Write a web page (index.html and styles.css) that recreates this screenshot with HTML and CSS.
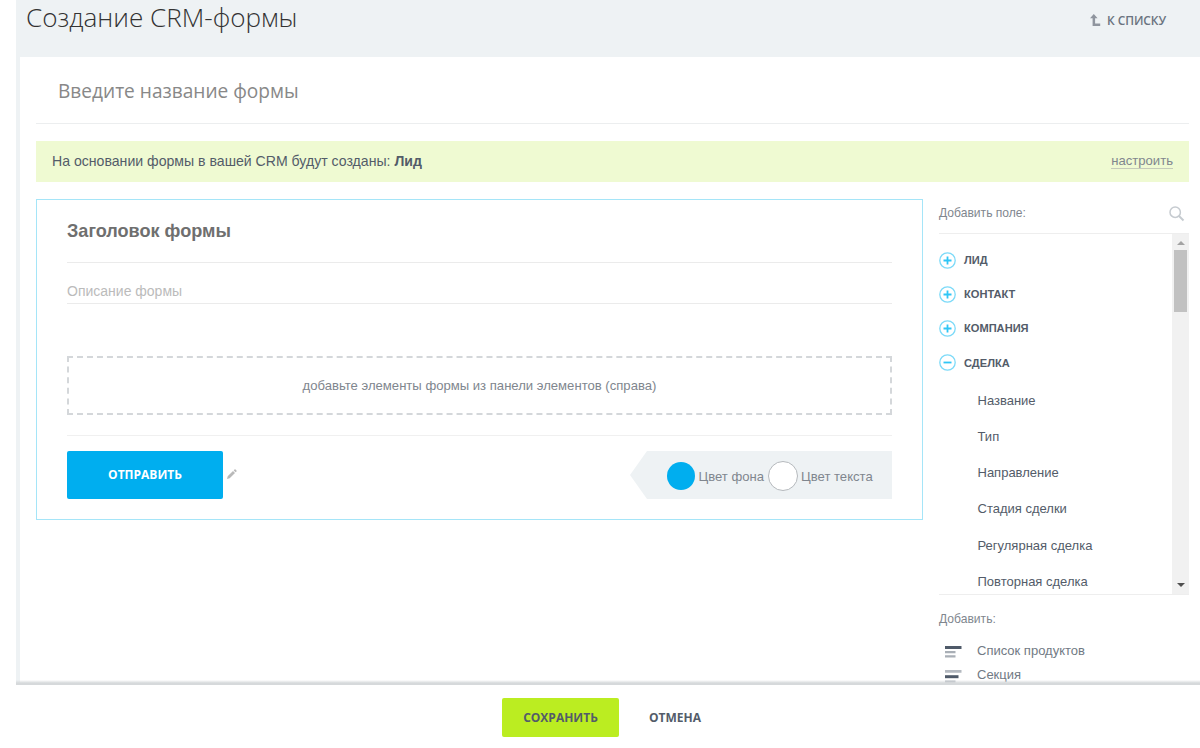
FILE: index.html
```html
<!DOCTYPE html>
<html lang="ru">

<head>
  <meta charset="UTF-8" />
  <meta name="viewport" content="width=device-width, initial-scale=1.0" />
  <title>Создание CRM-формы</title>
  <link rel="stylesheet" href="styles.css">
</head>

<body>
  <div class="page">
    <div class="workarea">
      <div class="header">
        <h1>Создание CRM-формы</h1>
        <a href="#" class="back">
          <svg width="11" height="13" viewBox="0 0 11 13">
            <path d="M0 4.200L3.800 0l3.800 4.200H5.100V9.600H10.200V12H2.600V4.200z" fill="#8f959e" />
          </svg>
          <span>К списку</span>
        </a>
      </div>

      <div class="panel">
        <div class="name">Введите название формы</div>

        <div class="notice">
          <p>На основании формы в вашей CRM будут созданы: <b>Лид</b></p>
          <a href="#">настроить</a>
        </div>

        <div class="columns">
          <div class="form-card">
            <h2>Заголовок формы</h2>
            <div class="desc">Описание формы</div>
            <div class="drop">добавьте элементы формы из панели элементов (справа)</div>
            <div class="form-footer">
              <button type="button" class="send">Отправить</button>
              <svg class="pencil" width="10" height="10" viewBox="0 0 10 10" fill="#b9b9b9">
                <path d="M0 10l.7-2.700L6 2l2 2L2.700 9.300zM6.700 1.400L8 .1 9.900 2 8.600 3.300z" />
              </svg>
              <div class="colors">
                <span class="circle blue"></span>
                <span class="color-name">Цвет фона</span>
                <span class="circle white"></span>
                <span class="color-name">Цвет текста</span>
              </div>
            </div>
          </div>

          <div class="sidebar">
            <div class="search">
              <span>Добавить поле:</span>
              <svg width="16" height="16" viewBox="0 0 16 16" fill="none" stroke="#c6cbd0">
                <circle cx="6.200" cy="6.200" r="5.200" stroke-width="1.500" />
                <path d="M10 10l4.500 4.500" stroke-width="2" />
              </svg>
            </div>

            <div class="tree">
              <div class="tree-list">
                <ul class="groups">
                  <li>
                    <svg width="17" height="17" viewBox="0 0 17 17" class="toggle"><circle cx="8.500" cy="8.500" r="7.700" /><path d="M4.500 8.500h8M8.500 4.500v8" /></svg>
                    <span>Лид</span>
                  </li>
                  <li>
                    <svg width="17" height="17" viewBox="0 0 17 17" class="toggle"><circle cx="8.500" cy="8.500" r="7.700" /><path d="M4.500 8.500h8M8.500 4.500v8" /></svg>
                    <span>Контакт</span>
                  </li>
                  <li>
                    <svg width="17" height="17" viewBox="0 0 17 17" class="toggle"><circle cx="8.500" cy="8.500" r="7.700" /><path d="M4.500 8.500h8M8.500 4.500v8" /></svg>
                    <span>Компания</span>
                  </li>
                  <li>
                    <svg width="17" height="17" viewBox="0 0 17 17" class="toggle"><circle cx="8.500" cy="8.500" r="7.700" /><path d="M4.500 8.500h8" /></svg>
                    <span>Сделка</span>
                  </li>
                </ul>
                <ul class="fields">
                  <li>Название</li>
                  <li>Тип</li>
                  <li>Направление</li>
                  <li>Стадия сделки</li>
                  <li>Регулярная сделка</li>
                  <li>Повторная сделка</li>
                </ul>
              </div>
              <div class="scrollbar">
                <span class="arrow up"></span>
                <span class="thumb"></span>
                <span class="arrow down"></span>
              </div>
            </div>

            <div class="add-title">Добавить:</div>
            <ul class="add">
              <li>
                <svg width="17" height="12" viewBox="0 0 17 12">
                  <path d="M0 0h16.500v3H0z" fill="#4f5a69" />
                  <path d="M0 5h10.500v2.200H0zM0 9.200h10.500v2.200H0z" fill="#a9afb6" />
                </svg>
                <span>Список продуктов</span>
              </li>
              <li>
                <svg width="17" height="13" viewBox="0 0 17 13">
                  <path d="M0 0h16.500v2.800H0zM0 10.500h10.500v2.200H0z" fill="#b4b9c0" />
                  <path d="M0 5.200h13.500v3H0z" fill="#4f5a69" />
                </svg>
                <span>Секция</span>
              </li>
            </ul>
          </div>
        </div>
      </div>
    </div>

    <div class="actions">
      <button type="button" class="save">Сохранить</button>
      <button type="button" class="cancel">Отмена</button>
    </div>
  </div>
</body>

</html>
```
FILE: styles.css
```css
* {
  margin: 0;
  padding: 0;
  box-sizing: border-box;
}

body {
  height: 100vh;
  overflow: hidden;
  background: #fff;
  font-family: 'Liberation Sans', Arial, sans-serif;
  color: #535c69;
  white-space: nowrap;
}

ul {
  list-style: none;
}

a {
  text-decoration: none;
}

button {
  border: none;
  cursor: pointer;
}

svg {
  flex-shrink: 0;
}

.page {
  height: 100%;
  padding-left: 16px;
}

.workarea {
  position: relative;
  height: 685px;
  overflow: hidden;
  background: #eef2f4;
}

/* shadow of the bottom bar */
.workarea::after {
  content: "";
  position: absolute;
  left: 0;
  right: 0;
  bottom: 0;
  height: 5px;
  background: linear-gradient(rgba(200, 203, 206, 0), #d6d9db 60%, #d6d9db);
}

.header {
  height: 57px;
  padding: 0 34px 0 10px;
  display: flex;
  justify-content: space-between;
}

.header h1 {
  font: 300 26.1px/35px 'Open Sans', sans-serif;
  color: #333;
}

.back {
  display: flex;
  gap: 6px;
  height: 40px;
  align-items: center;
  font: 600 12px 'Open Sans', sans-serif;
  letter-spacing: -0.1px;
  text-transform: uppercase;
  color: #6b7480;
}

.panel {
  height: 640px;
  margin-left: 4px;
  padding: 0 11px 0 16px;
  background: #fff;
}

.name {
  height: 67px;
  padding-left: 22px;
  border-bottom: 1px solid #eceeef;
  font: 19.1px/68px 'Open Sans', sans-serif;
  color: #888;
}

.notice {
  display: flex;
  justify-content: space-between;
  align-items: center;
  height: 41px;
  margin: 17px 0;
  padding: 0 16px;
  background: #effad2;
  font-size: 14.1px;
}

.notice p {
  padding-bottom: 1px;
}

.notice a {
  margin-top: -1px;
  font-size: 13.1px;
  color: #80868e;
  border-bottom: 1px solid #c5cbb9;
}

.columns {
  display: flex;
  justify-content: space-between;
  align-items: flex-start;
}

.form-card {
  width: 887px;
  height: 321px;
  padding: 0 30px;
  border: 1px solid #a5e5f8;
}

.form-card h2 {
  height: 63px;
  border-bottom: 1px solid #ebebeb;
  font-size: 18.1px;
  line-height: 63px;
  color: #6f6f6f;
}

.desc {
  height: 41px;
  border-bottom: 1px solid #ebebeb;
  font-size: 14px;
  line-height: 57px;
  color: #bbb;
}

.drop {
  height: 59px;
  margin: 52px 0 20px;
  border: 2px dashed #d4d7da;
  font-size: 13.1px;
  line-height: 55px;
  text-align: center;
  color: #80868e;
}

.form-footer {
  display: flex;
  padding-top: 15px;
  border-top: 1px solid #f0f0f0;
}

.send {
  width: 156px;
  height: 48px;
  padding-bottom: 1px;
  border-radius: 2px;
  background: #00aeef;
  font: 700 12px 'Open Sans', sans-serif;
  text-transform: uppercase;
  color: #fff;
}

.pencil {
  margin: 18px 0 0 4px;
}

.colors {
  display: flex;
  align-items: center;
  width: 262px;
  height: 48px;
  margin-left: auto;
  padding: 2px 0 0 37px;
  background: #eef2f4;
  clip-path: polygon(17px 0, 100% 0, 100% 100%, 17px 100%, 0 50%);
  font-size: 13.1px;
  color: #80868e;
}

.circle {
  width: 28px;
  height: 28px;
  border-radius: 50%;
}

.blue {
  background: #00aeef;
}

.white {
  width: 30px;
  height: 30px;
  border: 1px solid #b5b9bd;
  background: #fff;
}

.color-name {
  margin: 0 3.5px;
}

.sidebar {
  width: 250px;
  font-size: 13px;
}

.search {
  display: flex;
  justify-content: space-between;
  height: 35px;
  padding: 7px 4px 0 0;
  border-bottom: 1px solid #eee;
  font-size: 12.1px;
  color: #80868e;
}

.tree {
  display: flex;
  height: 361px;
  border-bottom: 1px solid #eee;
}

.tree-list {
  flex: 1;
  padding-top: 9px;
}

.groups li {
  display: flex;
  align-items: center;
  gap: 8px;
  height: 34.2px;
  font-size: 11.1px;
  font-weight: bold;
  text-transform: uppercase;
}

.toggle {
  fill: none;
  stroke: #2fc6f6;
}

.toggle circle {
  stroke: #7cdaf8;
  stroke-width: 1.3;
}

.toggle path {
  stroke-width: 1.8;
}

.fields {
  padding: 3px 0 0 38.5px;
}

.fields li {
  height: 36.2px;
  line-height: 36px;
}

.scrollbar {
  display: flex;
  flex-direction: column;
  align-items: center;
  width: 17px;
  background: #f1f1f1;
}

.thumb {
  width: 13px;
  height: 62px;
  margin-top: 5px;
  background: #c1c1c1;
}

.arrow {
  border: 4px solid transparent;
}

.up {
  margin-top: 7px;
  border-bottom-color: #a3a3a3;
  border-top-width: 0;
}

.down {
  margin: auto 0 7px;
  border-top-color: #505050;
  border-bottom-width: 0;
}

.add-title {
  margin-top: 16px;
  font-size: 12.1px;
  line-height: 16px;
  color: #80868e;
}

.add {
  padding: 11px 0 0 6px;
}

.add li {
  display: flex;
  align-items: center;
  gap: 15px;
  height: 24.3px;
  color: #717a84;
}

.add svg {
  margin-top: 4px;
}

.actions {
  display: flex;
  padding: 13px 0 0 486px;
}

.actions button {
  height: 39px;
  font: 700 12px 'Open Sans', sans-serif;
  text-transform: uppercase;
  color: #535c69;
}

.actions .save {
  width: 117px;
  border-radius: 2px;
  background: #bbed21;
}

.actions .cancel {
  margin-left: 30px;
  background: none;
}
```
